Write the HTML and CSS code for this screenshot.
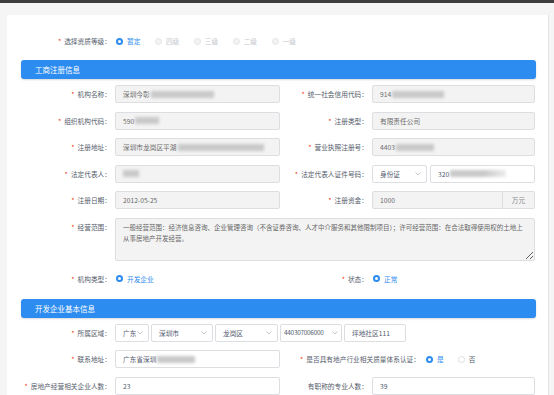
FILE: index.html
```html
<!DOCTYPE html>
<html lang="zh-CN">
<head>
    <meta charset="utf-8"/>
    <title>开发企业资质申请</title>
    <link rel="stylesheet" href="styles.css">
</head>
<body>
    <div class="topbar"></div>
    <div class="page">
        <div class="card">
            <!-- 资质等级 -->
            <div class="level-row">
                <div class="label req">选择资质等级：</div>
                <div class="radios">
                    <span class="radio on"><i></i>暂定</span>
                    <span class="radio off"><i></i>四级</span>
                    <span class="radio off"><i></i>三级</span>
                    <span class="radio off"><i></i>二级</span>
                    <span class="radio off"><i></i>一级</span>
                </div>
            </div>

            <!-- 工商注册信息 -->
            <div class="section-title">工商注册信息</div>
            <div class="grid">
                <div class="label req">机构名称：</div>
                <div class="field disabled">深圳今彰<span class="blur w63"></span></div>
                <div class="label req">统一社会信用代码：</div>
                <div class="field disabled">914<span class="blur w52"></span></div>

                <div class="label req">组织机构代码：</div>
                <div class="field disabled">590<span class="blur w24"></span></div>
                <div class="label req">注册类型：</div>
                <div class="field disabled">有限责任公司</div>

                <div class="label req">注册地址：</div>
                <div class="field disabled">深圳市龙岗区平湖<span class="blur w86"></span></div>
                <div class="label req">营业执照注册号：</div>
                <div class="field disabled">4403<span class="blur w38"></span></div>

                <div class="label req">法定代表人：</div>
                <div class="field disabled"><span class="blur w16 first"></span></div>
                <div class="label req">法定代表人证件号码：</div>
                <div class="combo">
                    <div class="field select id-type">身份证<svg class="chev" width="6" height="4" viewBox="0 0 6 4"><polyline points="0.5,0.5 3,3 5.5,0.5"/></svg></div>
                    <div class="field grow">320<span class="blur w56 light"></span></div>
                </div>

                <div class="label req">注册日期：</div>
                <div class="field disabled">2012-05-25</div>
                <div class="label req">注册资金：</div>
                <div class="combo joined">
                    <div class="field disabled grow">1000</div>
                    <div class="addon">万元</div>
                </div>

                <div class="label req top">经营范围：</div>
                <textarea class="field area" readonly>一般经营范围：经济信息咨询、企业管理咨询（不含证券咨询、人才中介服务和其他限制项目）；许可经营范围：在合法取得使用权的土地上
从事房地产开发经营。</textarea>

                <div class="label req">机构类型：</div>
                <div class="radios"><span class="radio on"><i></i>开发企业</span></div>
                <div class="label req">状态：</div>
                <div class="radios"><span class="radio on"><i></i>正常</span></div>
            </div>

            <!-- 开发企业基本信息 -->
            <div class="section-title second">开发企业基本信息</div>
            <div class="grid">
                <div class="label req">所属区域：</div>
                <div class="region">
                    <div class="field select s1">广东<svg class="chev" width="6" height="4" viewBox="0 0 6 4"><polyline points="0.5,0.5 3,3 5.5,0.5"/></svg></div>
                    <div class="field select s2">深圳市<svg class="chev" width="6" height="4" viewBox="0 0 6 4"><polyline points="0.5,0.5 3,3 5.5,0.5"/></svg></div>
                    <div class="field select s3">龙岗区<svg class="chev" width="6" height="4" viewBox="0 0 6 4"><polyline points="0.5,0.5 3,3 5.5,0.5"/></svg></div>
                    <div class="field select s4"><span class="code">440307006000</span><svg class="chev" width="6" height="4" viewBox="0 0 6 4"><polyline points="0.5,0.5 3,3 5.5,0.5"/></svg></div>
                    <div class="field s5">坪地社区111</div>
                </div>

                <div class="label req">联系地址：</div>
                <div class="field">广东省深圳<span class="blur w38"></span></div>
                <div class="cert">
                    <span class="label req">是否具有地产行业相关质量体系认证：</span>
                    <span class="radio on"><i></i>是</span>
                    <span class="radio plain"><i></i>否</span>
                </div>

                <div class="label req">房地产经营相关企业人数：</div>
                <div class="field">23</div>
                <div class="label">有职称的专业人数：</div>
                <div class="field">39</div>
            </div>
        </div>
    </div>
</body>
</html>
```

FILE: styles.css
```css
html, body {
    margin: 0;
    padding: 0;
    height: 100%;
}
body {
    background: #f5f5f5;
    font-family: "Noto Sans CJK SC", "Noto Sans", sans-serif;
    font-size: 6.7px;
    color: #515a6e;
    overflow: hidden;
}
.topbar {
    height: 3px;
    background: #3d3d3d;
}
.page {
    padding: 12px 5px 0 7px;
}
.card {
    background: #fff;
    border-right: 1px solid #e2e2e2;
    padding: 17px 12px 2px 14px;
}
.level-row {
    display: flex;
    align-items: center;
    height: 18px;
    margin-bottom: 10px;
}
.level-row .label {
    width: 94px;
}
.level-row .radio {
    margin-right: 13.5px;
}
.label {
    text-align: right;
    padding-right: 4px;
    white-space: nowrap;
    color: #555c6b;
    box-sizing: border-box;
}
.label.top {
    align-self: start;
    padding-top: 4px;
}
.req::before {
    content: "*";
    color: #ed4014;
    margin-right: 3px;
    font-size: 7px;
}
.radios {
    display: flex;
    align-items: center;
}
.radio {
    display: inline-flex;
    align-items: center;
    margin-right: 18px;
    white-space: nowrap;
}
.radio i {
    width: 7px;
    height: 7px;
    border-radius: 50%;
    box-sizing: border-box;
    margin-right: 4px;
    margin-left: 1px;
}
.radio.on {
    color: #2d8cf0;
}
.radio.on i {
    border: 2.3px solid #2d8cf0;
    background: #fff;
}
.radio.off {
    color: #c5c8ce;
}
.radio.off i {
    border: 1px solid #e3e5e8;
    background: #f3f3f3;
}
.radio.plain {
    color: #515a6e;
}
.radio.plain i {
    border: 1px solid #dcdee2;
    background: #fff;
}
.section-title {
    height: 19px;
    line-height: 19px;
    background: #2d8cf0;
    color: #fff;
    border-radius: 3px;
    padding-left: 14px;
    font-size: 7.5px;
    box-shadow: 0 1px 2px rgba(0, 0, 0, 0.15);
    margin-bottom: 6px;
    width: 515px;
    box-sizing: border-box;
}
.section-title.second {
    margin-top: 11px;
}
.grid {
    display: grid;
    grid-template-columns: 94px 165px 92px 163px;
    grid-auto-rows: minmax(18px, auto);
    row-gap: 8.5px;
    align-items: center;
}
.field {
    height: 18px;
    box-sizing: border-box;
    border: 1px solid #dcdee2;
    border-radius: 2px;
    background: #fff;
    padding: 0 7px;
    display: flex;
    align-items: center;
    white-space: nowrap;
    overflow: hidden;
    color: #515a6e;
    font-family: inherit;
    font-size: 6.7px;
}
.field.disabled {
    background: #f3f3f3;
    color: #6c6c6c;
}
.field.area {
    grid-column: 2 / span 3;
    height: 43px;
    display: block;
    padding: 3px 7px;
    font-size: 6.5px;
    line-height: 11px;
    white-space: pre-wrap;
    background: #f3f3f3;
    color: #666;
    resize: vertical;
    outline: none;
    margin: 0;
    margin-top: 0.5px;
}
.blur {
    display: inline-block;
    height: 7px;
    background: #c9c9c9;
    filter: blur(1.6px);
    margin-left: 1px;
}
.blur.light {
    background: linear-gradient(to right, #c9c9c9 60%, #ececec);
}
.blur.first {
    margin-left: 0;
}
.w16 { width: 16px; }
.w24 { width: 24px; }
.w38 { width: 38px; }
.w52 { width: 52px; }
.w56 { width: 56px; }
.w63 { width: 63px; }
.w86 { width: 86px; }
.combo {
    display: flex;
    gap: 3px;
}
.combo.joined {
    gap: 0;
}
.combo.joined .field {
    border-radius: 2px 0 0 2px;
}
.grow {
    flex: 1;
}
.id-type {
    width: 55px;
    flex: none;
}
.addon {
    width: 32px;
    height: 18px;
    box-sizing: border-box;
    border: 1px solid #dcdee2;
    border-left: 0;
    border-radius: 0 2px 2px 0;
    background: #f3f3f3;
    color: #8a8a8a;
    display: flex;
    align-items: center;
    justify-content: center;
}
.select {
    justify-content: space-between;
    padding-right: 5px;
}
.chev {
    flex: none;
}
.chev polyline {
    fill: none;
    stroke: #b5b8bf;
    stroke-width: 0.8;
}
.s4 {
    padding-left: 3px;
    padding-right: 3px;
}
.code {
    letter-spacing: -0.25px;
    font-size: 6.4px;
}
.region {
    grid-column: 2 / span 3;
    display: flex;
    gap: 2px;
}
.s1 { width: 34px; }
.s2 { width: 62px; }
.s3 { width: 63px; }
.s4 { width: 62px; }
.s5 { width: 62px; }
.cert {
    grid-column: 3 / span 2;
    display: flex;
    align-items: center;
    padding-left: 20px;
}
.cert .label {
    padding-right: 5px;
}
.cert .radio {
    margin-right: 13px;
}
```
